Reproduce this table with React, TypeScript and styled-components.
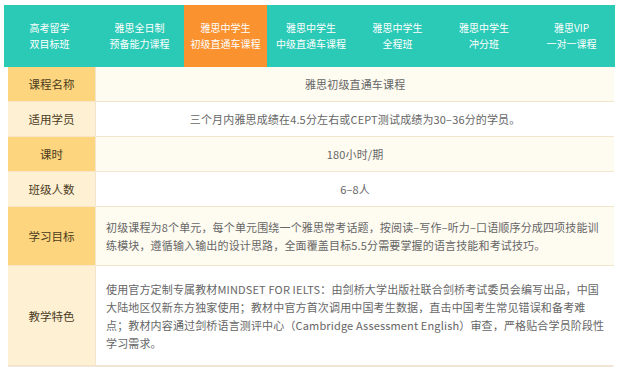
import { Fragment } from "react";
import styled, { createGlobalStyle } from "styled-components";

const GlobalStyle = createGlobalStyle`
  html, body {
    margin: 0;
    padding: 0;
    background: #fff;
  }
  body {
    font-family: "Noto Sans CJK SC", "Noto Sans", sans-serif;
  }
`;

const Page = styled.div`
  width: 625px;
  height: 378px;
  overflow: hidden;
  padding: 5px 10px 0 4px;
  box-sizing: border-box;
`;

const TabBar = styled.div`
  display: grid;
  grid-template-columns: 91px 89px 83px 88px 85px 88px 1fr;
  height: 62px;
  background: #2bcab6;
`;

const Tab = styled.div<{ $active?: boolean }>`
  display: flex;
  flex-direction: column;
  align-items: center;
  justify-content: center;
  background: ${(p) => (p.$active ? "#fa922f" : "transparent")};
  color: #fff;
  font-size: 10px;
  line-height: 16px;
  white-space: nowrap;
`;

const Table = styled.div`
  margin: 0 2px 0 4px;
  border-right: 1px solid #ece6dc;
  border-bottom: 1px solid #ece6dc;
  display: grid;
  grid-template-columns: 87px 1fr;
`;

const Label = styled.div<{ $h: number; $dark: boolean }>`
  height: ${(p) => p.$h}px;
  display: flex;
  align-items: center;
  justify-content: center;
  background: ${(p) => (p.$dark ? "#fdd57e" : "#fdf0d3")};
  border-bottom: 1px solid #f7e6c6;
  box-sizing: border-box;
  color: #4b3b22;
  font-size: 11.5px;
`;

const Cell = styled.div<{ $h: number; $cream: boolean; $left?: boolean }>`
  height: ${(p) => p.$h}px;
  display: flex;
  flex-direction: column;
  justify-content: center;
  align-items: ${(p) => (p.$left ? "flex-start" : "center")};
  padding: 0 10px;
  background: ${(p) => (p.$cream ? "#fefbf1" : "#fff")};
  border-bottom: 1px solid #f3e4ce;
  border-left: 1px solid #f3e4ce;
  box-sizing: border-box;
  color: #666;
  font-size: 11px;
  letter-spacing: 0.15px;
  line-height: ${(p) => (p.$left ? 18 : 16)}px;
`;

const Line = styled.span`
  display: block;
  white-space: nowrap;
`;

const tabs = [
  ["高考留学", "双目标班"],
  ["雅思全日制", "预备能力课程"],
  ["雅思中学生", "初级直通车课程"],
  ["雅思中学生", "中级直通车课程"],
  ["雅思中学生", "全程班"],
  ["雅思中学生", "冲分班"],
  ["雅思VIP", "一对一课程"],
];

const rows: { label: string; h: number; lines: string[]; left?: boolean }[] = [
  { label: "课程名称", h: 35, lines: ["雅思初级直通车课程"] },
  {
    label: "适用学员",
    h: 35,
    lines: ["三个月内雅思成绩在4.5分左右或CEPT测试成绩为30–36分的学员。"],
  },
  { label: "课时", h: 35, lines: ["180小时/期"] },
  { label: "班级人数", h: 35, lines: ["6–8人"] },
  {
    label: "学习目标",
    h: 59,
    left: true,
    lines: [
      "初级课程为8个单元，每个单元围绕一个雅思常考话题，按阅读–写作–听力–口语顺序分成四项技能训",
      "练模块，遵循输入输出的设计思路，全面覆盖目标5.5分需要掌握的语言技能和考试技巧。",
    ],
  },
  {
    label: "教学特色",
    h: 100,
    left: true,
    lines: [
      "使用官方定制专属教材MINDSET FOR IELTS：由剑桥大学出版社联合剑桥考试委员会编写出品，中国",
      "大陆地区仅新东方独家使用；教材中官方首次调用中国考生数据，直击中国考生常见错误和备考难",
      "点；教材内容通过剑桥语言测评中心（Cambridge Assessment English）审查，严格贴合学员阶段性",
      "学习需求。",
    ],
  },
];

export default function App() {
  return (
    <Page>
      <GlobalStyle />
      <TabBar>
        {tabs.map((t, i) => (
          <Tab key={i} $active={i === 2}>
            <span>{t[0]}</span>
            <span>{t[1]}</span>
          </Tab>
        ))}
      </TabBar>
      <Table>
        {rows.map((r, i) => (
          <Fragment key={i}>
            <Label $h={r.h} $dark={i % 2 === 0}>
              {r.label}
            </Label>
            <Cell $h={r.h} $cream={i % 2 === 0} $left={r.left}>
              {r.lines.map((l, j) => (
                <Line key={j}>{l}</Line>
              ))}
            </Cell>
          </Fragment>
        ))}
      </Table>
    </Page>
  );
}
